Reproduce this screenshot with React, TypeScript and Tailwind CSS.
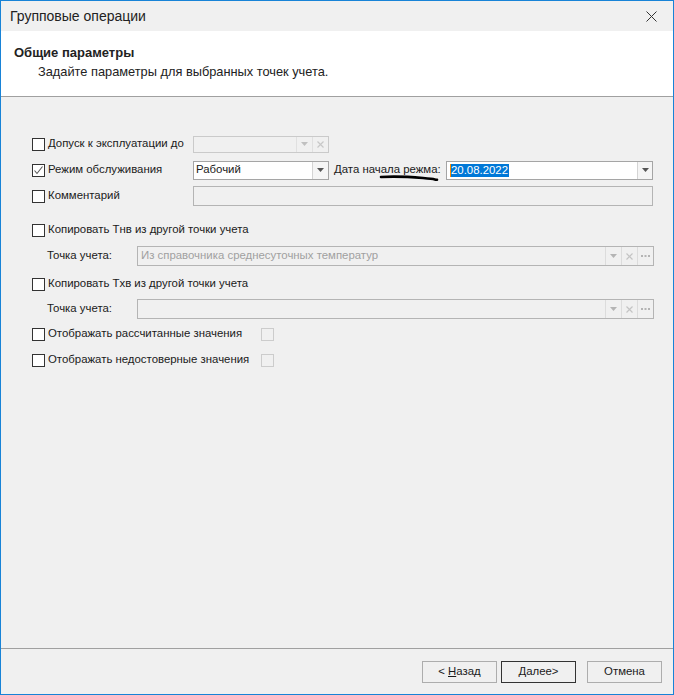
import React from "react";

const FONT = { fontFamily: '"Liberation Sans", Arial, sans-serif' };

function Check({ checked = false, disabled = false }: { checked?: boolean; disabled?: boolean }) {
  return (
    <div
      className={
        "w-[13px] h-[13px] shrink-0 border flex items-center justify-center " +
        (disabled ? "border-[#cccccc] bg-[#f0f0f0]" : "border-[#333333] bg-white")
      }
    >
      {checked && (
        <svg width="11" height="11" viewBox="0 0 11 11">
          <path d="M1.5 5.5 L4 8.5 L9.5 1.5" fill="none" stroke="#5a5a5a" strokeWidth="1.1" />
        </svg>
      )}
    </div>
  );
}

function Arrow({ color }: { color: string }) {
  return (
    <svg width="7" height="4" viewBox="0 0 7 4">
      <path d="M0 0 H7 L3.5 4 Z" fill={color} />
    </svg>
  );
}

function Cross({ color }: { color: string }) {
  return (
    <svg width="7" height="7" viewBox="0 0 7 7">
      <path d="M0.5 0.5 L6.5 6.5 M6.5 0.5 L0.5 6.5" fill="none" stroke={color} strokeWidth="1.2" />
    </svg>
  );
}

function Dots({ color }: { color: string }) {
  return (
    <svg width="9" height="2" viewBox="0 0 9 2">
      <rect x="0" y="0" width="2" height="2" fill={color} />
      <rect x="3.5" y="0" width="2" height="2" fill={color} />
      <rect x="7" y="0" width="2" height="2" fill={color} />
    </svg>
  );
}

function Btn({ children, dark = false }: { children: React.ReactNode; dark?: boolean }) {
  return (
    <div
      className={
        "w-[75px] h-[22px] flex items-center justify-center text-[11.4px] text-[#1a1a1a] bg-[#f0f0f0] border " +
        (dark ? "border-[#333333]" : "border-[#adadad]")
      }
    >
      {children}
    </div>
  );
}

export default function App() {
  return (
    <div
      className="w-[674px] h-[695px] border border-[#1883d7] bg-[#f0f0f0] flex flex-col overflow-hidden relative text-[#1a1a1a]"
      style={FONT}
    >
      {/* Title bar */}
      <div className="h-[30px] shrink-0 flex items-center justify-between pl-[9px] pr-[16px] bg-[#f0f0f0]">
        <span className="text-[14px] text-[#222222]">Групповые операции</span>
        <svg width="11" height="11" viewBox="0 0 11 11">
          <path d="M0.5 0.5 L10.5 10.5 M10.5 0.5 L0.5 10.5" fill="none" stroke="#333333" strokeWidth="1" />
        </svg>
      </div>

      {/* Header */}
      <div className="h-[66px] shrink-0 bg-white border-b border-[#a0a0a0] pl-[13px] pt-[14px]">
        <div className="text-[13px] font-bold leading-[16px] text-[#222222]">Общие параметры</div>
        <div className="text-[12.8px] leading-[16px] mt-[3px] pl-[24px] text-[#222222]">
          Задайте параметры для выбранных точек учета.
        </div>
      </div>

      {/* Content */}
      <div className="flex-1 flex flex-col pt-[34px] text-[11.4px]">
        {/* Row 1 */}
        <div className="h-[26px] flex items-center pl-[31px]">
          <Check />
          <span className="ml-[3px] w-[145px]">Допуск к эксплуатации до</span>
          <div className="w-[136px] h-[17px] border border-[#cacaca] bg-[#f0f0f0] flex">
            <div className="flex-1" />
            <div className="w-[16px] border-l border-[#e0e0e0] flex items-center justify-center">
              <Arrow color="#c0c0c0" />
            </div>
            <div className="w-[16px] border-l border-[#e0e0e0] flex items-center justify-center">
              <Cross color="#c8c8c8" />
            </div>
          </div>
        </div>

        {/* Row 2 */}
        <div className="h-[26px] flex items-center pl-[31px]">
          <Check checked />
          <span className="ml-[3px] w-[145px]">Режим обслуживания</span>
          <div className="w-[136px] h-[19px] border border-[#a5a5a5] bg-white flex">
            <div className="flex-1 flex items-center pl-[2px]">Рабочий</div>
            <div className="w-[16px] border-l border-[#d4d4d4] bg-[#f5f5f5] flex items-center justify-center">
              <Arrow color="#555555" />
            </div>
          </div>
          <span className="ml-[5px] w-[112px] relative">
            Дата начала режма:
            <svg
              className="absolute left-[45px] top-[14px]"
              width="62"
              height="8"
              viewBox="0 0 62 8"
            >
              <path
                d="M2 2 C 14 1.2, 30 1.8, 44 3 S 54 4.3, 58 4.8"
                fill="none"
                stroke="#000000"
                strokeWidth="2.6"
                strokeLinecap="round"
              />
            </svg>
          </span>
          <div className="w-[207px] h-[19px] border border-[#a5a5a5] bg-white flex">
            <div className="flex-1 flex items-center pl-[3px]">
              <span className="w-[1px] h-[13px] bg-[#ff8c00]" />
              <span className="bg-[#0078d7] text-white leading-[13px] pr-[1px]">20.08.2022</span>
            </div>
            <div className="w-[15px] border-l border-[#d4d4d4] bg-[#f5f5f5] flex items-center justify-center">
              <Arrow color="#555555" />
            </div>
          </div>
        </div>

        {/* Row 3 */}
        <div className="h-[26px] flex items-center pl-[31px]">
          <Check />
          <span className="ml-[3px] w-[145px]">Комментарий</span>
          <div className="w-[460px] h-[20px] border border-[#b4b4b4] bg-[#f0f0f0]" />
        </div>

        {/* Row 4 */}
        <div className="h-[26px] mt-[8px] flex items-center pl-[31px]">
          <Check />
          <span className="ml-[3px]">Копировать Тнв из другой точки учета</span>
        </div>

        {/* Row 5 */}
        <div className="h-[26px] flex items-center pl-[46px]">
          <span className="w-[90px]">Точка учета:</span>
          <div className="w-[517px] h-[20px] border border-[#b4b4b4] bg-[#f0f0f0] flex">
            <div className="flex-1 flex items-center pl-[3px] text-[#a0a0a0]">
              Из справочника среднесуточных температур
            </div>
            <div className="w-[16px] border-l border-[#dcdcdc] flex items-center justify-center">
              <Arrow color="#b4b4b4" />
            </div>
            <div className="w-[16px] border-l border-[#dcdcdc] flex items-center justify-center">
              <Cross color="#c4c4c4" />
            </div>
            <div className="w-[16px] border-l border-[#dcdcdc] flex items-center justify-center">
              <Dots color="#b4b4b4" />
            </div>
          </div>
        </div>

        {/* Row 6 */}
        <div className="h-[26px] mt-[2px] flex items-center pl-[31px]">
          <Check />
          <span className="ml-[3px]">Копировать Txв из другой точки учета</span>
        </div>

        {/* Row 7 */}
        <div className="h-[24px] flex items-center pl-[46px]">
          <span className="w-[90px]">Точка учета:</span>
          <div className="w-[517px] h-[20px] border border-[#b4b4b4] bg-[#f0f0f0] flex">
            <div className="flex-1" />
            <div className="w-[16px] border-l border-[#dcdcdc] flex items-center justify-center">
              <Arrow color="#b4b4b4" />
            </div>
            <div className="w-[16px] border-l border-[#dcdcdc] flex items-center justify-center">
              <Cross color="#c4c4c4" />
            </div>
            <div className="w-[16px] border-l border-[#dcdcdc] flex items-center justify-center">
              <Dots color="#b4b4b4" />
            </div>
          </div>
        </div>

        {/* Row 8 */}
        <div className="h-[26px] flex items-center pl-[31px]">
          <Check />
          <span className="ml-[3px] w-[213px]">Отображать рассчитанные значения</span>
          <Check disabled />
        </div>

        {/* Row 9 */}
        <div className="h-[26px] flex items-center pl-[31px]">
          <Check />
          <span className="ml-[3px] w-[213px]">Отображать недостоверные значения</span>
          <Check disabled />
        </div>
      </div>

      {/* Footer */}
      <div className="h-[46px] shrink-0 border-t border-[#a0a0a0] flex items-start justify-end pt-[12px] pr-[11px]">
        <Btn>
          &lt; <span className="underline ml-[3px]">Н</span>азад
        </Btn>
        <div className="w-[4px]" />
        <Btn dark>
          <span className="underline">Д</span>алее&gt;
        </Btn>
        <div className="w-[11px]" />
        <Btn>Отмена</Btn>
      </div>
    </div>
  );
}
